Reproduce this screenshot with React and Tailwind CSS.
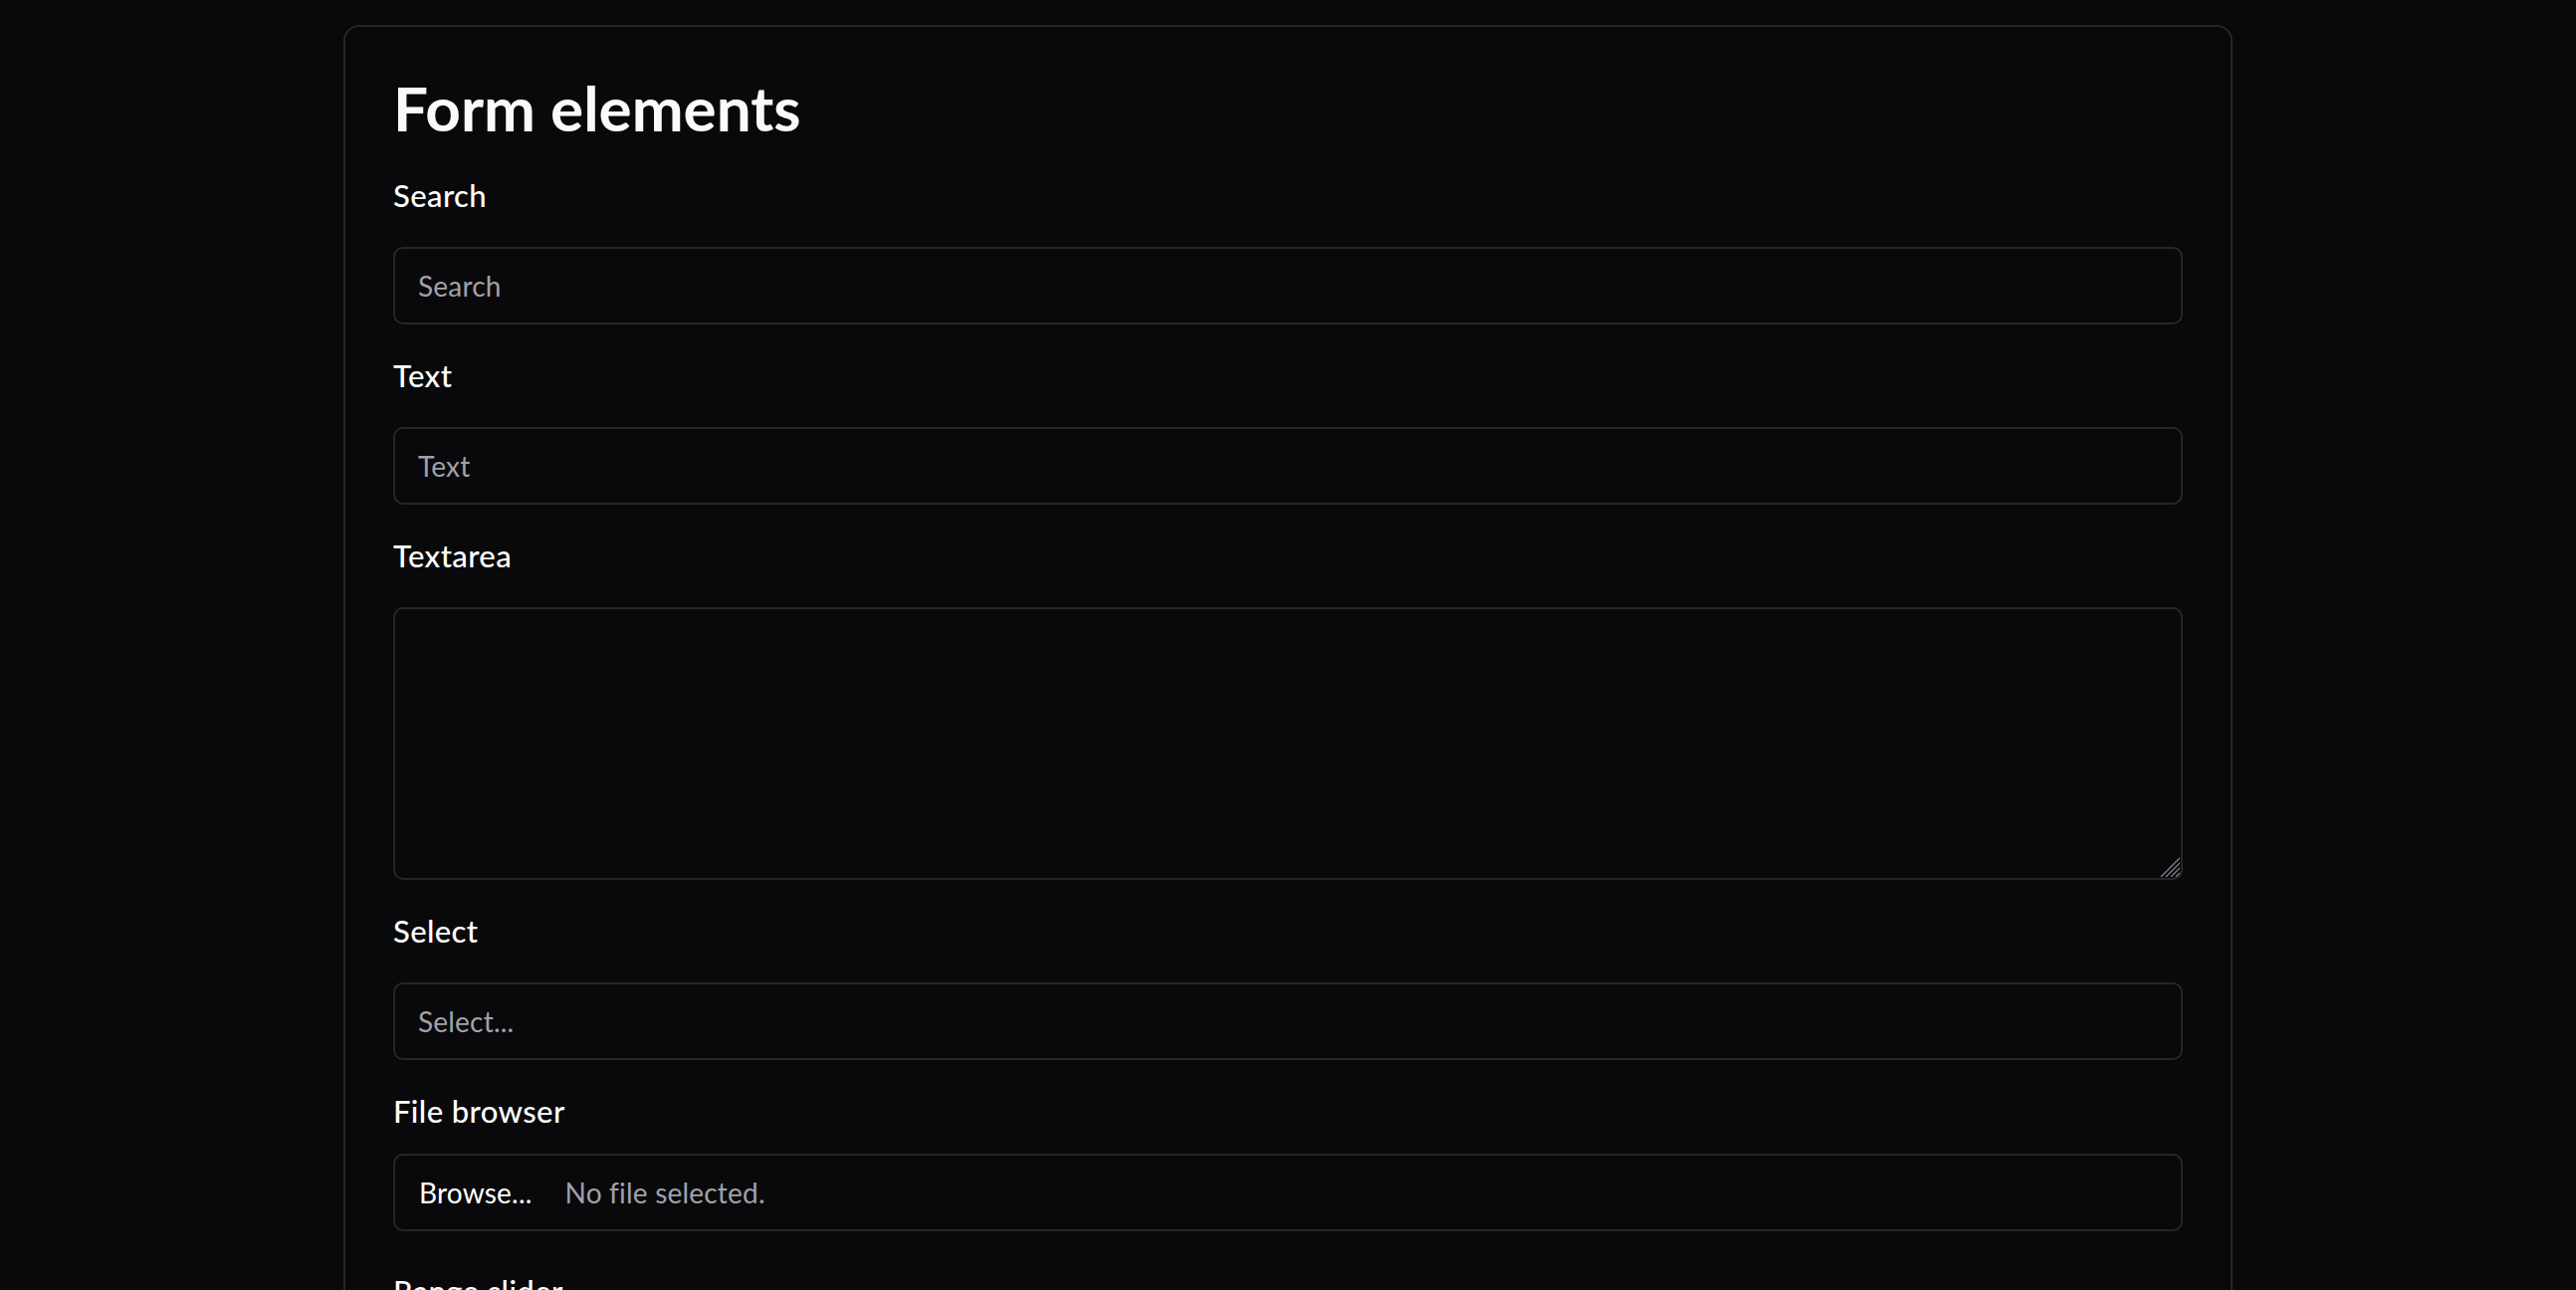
import React from "react";

const font = { fontFamily: "Lato, 'Noto Sans', sans-serif" };

function Label({ children }) {
  return (
    <label className="block text-[31px] leading-[45px] font-medium tracking-[0.4px] text-white">
      {children}
    </label>
  );
}

function Field({ label, children, gap = "gap-[29px]" }) {
  return (
    <div className={"flex flex-col " + gap}>
      <Label>{label}</Label>
      {children}
    </div>
  );
}

const inputCls =
  "block w-full h-[78px] rounded-[10px] border-2 border-[#27272a] bg-[#09090b] px-[23px] text-[28px] tracking-[0.2px] text-white placeholder:text-[#a1a1aa] outline-none";

export default function App() {
  return (
    <div className="min-h-screen w-full bg-[#09090b] pt-[25px]" style={font}>
      <div className="mx-auto w-[1898px] rounded-[16px] border-2 border-[#27272a] bg-[#09090b] px-[48px] pt-[45px] pb-[48px]">
        <h1 className="text-[62px] leading-[72px] font-bold text-[#fafafa] mb-[30px]">
          Form elements
        </h1>
        <div className="flex flex-col gap-[29px]">
          <Field label="Search">
            <input type="search" placeholder="Search" className={inputCls} style={font} />
          </Field>
          <Field label="Text">
            <input type="text" placeholder="Text" className={inputCls} style={font} />
          </Field>
          <Field label="Textarea">
            <div className="relative">
              <textarea
                className="block w-full h-[274px] resize-none rounded-[10px] border-2 border-[#27272a] bg-[#09090b] px-[23px] py-[16px] text-[28px] text-white outline-none"
                style={font}
              />
              <svg
                className="absolute right-[3px] bottom-[3px]"
                width="20"
                height="20"
                viewBox="0 0 20 20"
              >
                <g stroke="#8a8a90" strokeWidth="1.2">
                  <line x1="1" y1="20" x2="20" y2="1" />
                  <line x1="6" y1="20" x2="20" y2="6" />
                  <line x1="11" y1="20" x2="20" y2="11" />
                  <line x1="16" y1="20" x2="20" y2="16" />
                </g>
              </svg>
            </div>
          </Field>
          <Field label="Select">
            <div className="flex h-[78px] w-full items-center rounded-[10px] border-2 border-[#27272a] bg-[#09090b] px-[23px] text-[28px] tracking-[0.2px] text-[#a1a1aa]">
              Select...
            </div>
          </Field>
          <Field label="File browser" gap="gap-[20px]">
            <div className="mb-[9px] flex h-[78px] w-full items-center gap-[33px] rounded-[10px] border-2 border-[#27272a] bg-[#09090b] px-[24px] text-[28px] tracking-[0.2px]">
              <span className="text-white">Browse...</span>
              <span className="text-[#a1a1aa]">No file selected.</span>
            </div>
          </Field>
          <Field label="Range slider">
            <div className="h-[40px] w-full flex items-center">
              <div className="h-[8px] w-full rounded-full bg-[#27272a]" />
            </div>
          </Field>
        </div>
      </div>
    </div>
  );
}
